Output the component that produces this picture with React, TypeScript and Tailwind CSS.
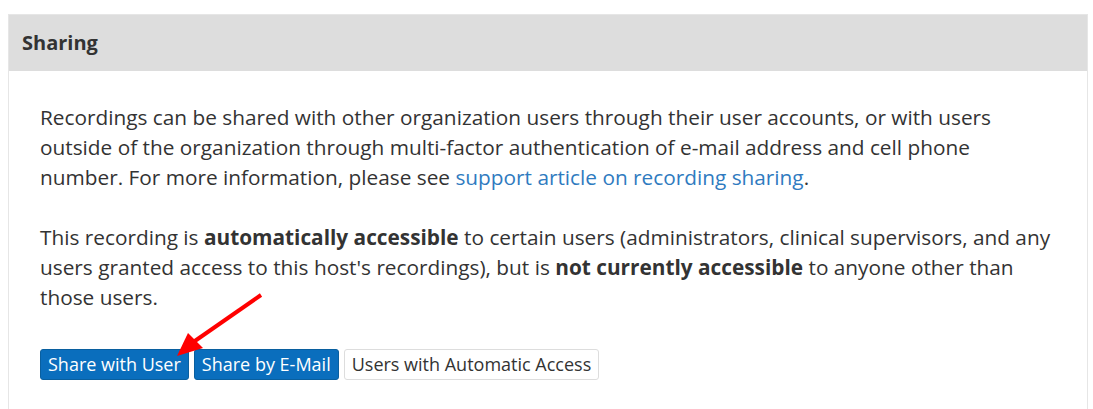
export default function App() {
  return (
    <div className="w-[1093px] h-[409px] bg-white pt-[14px] pl-[8px] overflow-hidden" style={{ fontFamily: '"Open Sans", "Liberation Sans", sans-serif' }}>
      <div className="relative w-[1080px] h-[420px] border border-[#e6e6e6] text-[#333333]">
        <div className="h-[56px] bg-[#dddddd] flex items-center pl-[13px]">
          <h3 className="text-[20px] font-bold text-[#333]">Sharing</h3>
        </div>
        <div className="pl-[31px] pr-[34px] pt-[31px]">
          <p className="text-[20.8px] leading-[30px]">
            Recordings can be shared with other organization users through their user accounts, or with users outside of the organization through multi-factor authentication of e-mail address and cell phone number. For more information, please see{" "}
            <a className="text-[#2f7bbf]">support article on recording sharing</a>.
          </p>
          <p className="text-[20.8px] leading-[30px] mt-[30px]">
            This recording is <b>automatically accessible</b> to certain users (administrators, clinical supervisors, and any users granted access to this host's recordings), but is <b>not currently accessible</b> to anyone other than those users.
          </p>
          <div className="flex gap-[5px] mt-[37px]">
            <button className="h-[31px] px-[7px] rounded-[3px] bg-[#0a6ebd] border border-[#095f9f] text-white text-[18px]">Share with User</button>
            <button className="h-[31px] px-[7px] rounded-[3px] bg-[#0a6ebd] border border-[#095f9f] text-white text-[18px]">Share by E-Mail</button>
            <button className="h-[31px] px-[7px] rounded-[3px] bg-white border border-[#dddddd] text-[#333] text-[18px]">Users with Automatic Access</button>
          </div>
        </div>
        <svg className="absolute left-[-9px] top-[-15px] pointer-events-none" width="400" height="400">
          <line x1="261" y1="295" x2="192" y2="343" stroke="#ff0000" strokeWidth="4" />
          <polygon points="177,356 188,333 203,348" fill="#ff0000" />
        </svg>
      </div>
    </div>
  );
}
